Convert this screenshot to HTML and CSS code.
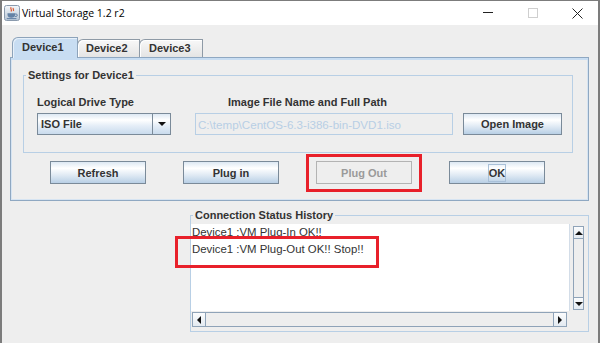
FILE: index.html
```html
<!DOCTYPE html>
<html lang="en">
<head>
    <meta charset="UTF-8">
    <title>Virtual Storage 1.2 r2</title>
    <link rel="stylesheet" href="styles.css">
</head>
<body>
    <div class="window">
        <div class="titlebar">
            <svg class="app-icon" width="16" height="16" viewBox="0 0 16 16">
                <defs>
                    <linearGradient id="iconBg" x1="0" y1="0" x2="0" y2="1">
                        <stop offset="0" stop-color="#f5f8fb"/>
                        <stop offset="1" stop-color="#b6c5d5"/>
                    </linearGradient>
                </defs>
                <rect x="0.5" y="0.5" width="15" height="15" rx="2" fill="url(#iconBg)" stroke="#8a9aad"/>
                <path d="M7.2 2.2c-1.6 1.4 1.4 2.2-.2 4.3M9.4 3c-1 1.1.9 1.5-.1 3" stroke="#e0562c" stroke-width="1.2" fill="none"/>
                <path d="M3.5 8.2h7.6v1.6c0 2-1.6 3-3.8 3s-3.8-1-3.8-3z" fill="#6482a6"/>
                <path d="M11.1 9h1a1.2 1.2 0 0 1 0 2.4h-1.3" stroke="#6482a6" fill="none"/>
                <path d="M2.8 13.6h9.6" stroke="#6482a6"/>
            </svg>
            <span class="title">Virtual Storage 1.2 r2</span>
            <div class="controls">
                <span class="ctl-min"></span>
                <span class="ctl-max"></span>
                <svg class="ctl-close" width="11" height="11" viewBox="0 0 11 11">
                    <path d="M0.5 0.5l10 10M10.5 0.5l-10 10" stroke="#222" stroke-width="1"/>
                </svg>
            </div>
        </div>

        <div class="content">
            <div class="tabs">
                <div class="tab active">Device1</div>
                <div class="tab tab-2">Device2</div>
                <div class="tab tab-3">Device3</div>
            </div>

            <div class="tab-panel">
                <fieldset class="group">
                    <legend>Settings for Device1</legend>
                    <div class="settings-body">
                        <label class="field-label">Logical Drive Type</label>
                        <label class="field-label path-label">Image File Name and Full Path</label>
                        <span></span>

                        <div class="combo">
                            <span class="combo-value">ISO File</span>
                            <span class="combo-arrow"></span>
                        </div>
                        <input class="path-field" type="text" value="C:\temp\CentOS-6.3-i386-bin-DVD1.iso" readonly>
                        <button class="btn btn-open">Open Image</button>
                    </div>
                </fieldset>

                <div class="actions">
                    <button class="btn">Refresh</button>
                    <button class="btn">Plug in</button>
                    <span class="marked"><button class="btn" disabled>Plug Out</button></span>
                    <button class="btn"><span class="focus">OK</span></button>
                </div>
            </div>

            <fieldset class="group history">
                <legend>Connection Status History</legend>
                <div class="history-body">
                    <div class="scroll-pane">
                        <div class="log">
                            <div class="log-line">Device1 :VM Plug-In OK!!</div>
                            <div class="log-line marked-line">Device1 :VM Plug-Out OK!! Stop!!</div>
                        </div>
                        <div class="vscroll">
                            <span class="sb-btn arrow-up"></span>
                            <span class="sb-track"></span>
                            <span class="sb-btn arrow-down"></span>
                        </div>
                        <div class="hscroll">
                            <span class="sb-btn arrow-left"></span>
                            <span class="sb-track"></span>
                            <span class="sb-btn arrow-right"></span>
                        </div>
                        <div class="corner"></div>
                    </div>
                </div>
            </fieldset>
        </div>
    </div>
</body>
</html>
```

FILE: styles.css
```css
:root {
    --bg: #eeeeee;
    --text: #333333;
    --blue-border: #b8cfe5;
    --control-border: #7a8a99;
    --tab-blue: #c8ddf2;
    --mark: #e8202a;
}

* {
    box-sizing: border-box;
}

body {
    margin: 0;
    background: #fff;
    font-family: "Liberation Sans", Arial, sans-serif;
    color: var(--text);
}

.window {
    width: 600px;
    height: 343px;
    border: 2px solid #7c7c7c;
    border-top-width: 1px;
    border-bottom: none;
    background: var(--bg);
    display: flex;
    flex-direction: column;
    overflow: hidden;
}

/* Title bar */
.titlebar {
    height: 24px;
    flex: none;
    background: #fff;
    display: flex;
    align-items: center;
}

.app-icon {
    margin-left: 2px;
}

.title {
    margin-left: 2px;
    font-family: "Segoe UI", "Open Sans", sans-serif;
    font-size: 10.5px;
    color: #000;
}

.controls {
    margin-left: auto;
    margin-right: 15px;
    display: flex;
    align-items: center;
}

.ctl-min {
    width: 10px;
    height: 1px;
    background: #222;
    margin-top: -1px;
}

.ctl-max {
    width: 10px;
    height: 10px;
    border: 1px solid #cfcfcf;
    margin-left: 35px;
}

.ctl-close {
    margin-left: 34px;
}

/* Tabs */
.content {
    flex: 1;
    padding: 12px 9px 0 8px;
}

.tabs {
    display: flex;
    align-items: flex-end;
    height: 20px;
    margin-left: 2px;
}

.tab {
    height: 18px;
    width: 63px;
    padding: 0 0 1px 8px;
    border: 1px solid #8e9aa6;
    border-bottom: none;
    border-top-left-radius: 6px 6px;
    background: linear-gradient(#f8f8f8, #e4e4e4);
    box-shadow: inset 1px 1px 0 #fff;
    font-size: 11px;
    font-weight: bold;
    display: flex;
    align-items: center;
    margin-left: -1px;
}

.tab.active {
    width: 66px;
    height: 21px;
    margin-left: 0;
    margin-bottom: -1px;
    padding: 0 0 2px 9px;
    position: relative;
    z-index: 1;
    border-color: #8da3ba;
    background: var(--tab-blue);
    box-shadow: inset 1px 1px 0 #e6f0fa;
}

.tab-3 {
    width: 64px;
    padding-left: 9px;
}

.tab-panel {
    border: 1px solid #8fa8c2;
    box-shadow: inset 0 2px 0 var(--tab-blue), inset 1px 0 0 #d6e4f2, inset -1px -1px 0 #d6e4f2;
    padding: 10px 15px 16px 12px;
}

/* Titled groups */
.group {
    margin: 0;
    padding: 0;
    min-width: 0;
    border: 1px solid var(--blue-border);
}

.group legend {
    margin-left: 2px;
    padding: 0 2px;
    font-size: 11px;
    font-weight: bold;
    line-height: 14px;
    color: var(--text);
}

.settings-body {
    display: grid;
    grid-template-columns: 158px 268px 99px;
    row-gap: 4px;
    padding: 13px 0 17px 13px;
}

.field-label {
    font-size: 11px;
    font-weight: bold;
    line-height: 14px;
}

.path-label {
    margin-left: 33px;
}

.combo {
    width: 134px;
    height: 22px;
    border: 1px solid var(--control-border);
    display: flex;
    background: linear-gradient(#dde8f3, #fff 30%, #e4edf7 60%, #c9dbed);
}

.combo-value {
    flex: 1;
    padding-left: 3px;
    font-size: 11px;
    font-weight: bold;
    line-height: 20px;
}

.combo-arrow {
    width: 18px;
    border-left: 1px solid var(--control-border);
    display: flex;
    align-items: center;
    justify-content: center;
}

.combo-arrow::before {
    content: "";
    border-left: 4px solid transparent;
    border-right: 4px solid transparent;
    border-top: 4px solid #111;
}

.path-field {
    width: 258px;
    height: 22px;
    margin: 0;
    padding: 0 2px;
    border: 1px solid var(--blue-border);
    background: var(--bg);
    color: var(--blue-border);
    font-family: "Liberation Sans", Arial, sans-serif;
    font-size: 11.6px;
    outline: none;
}

/* Buttons */
.btn {
    width: 96px;
    height: 23px;
    padding: 0;
    border: 1px solid var(--control-border);
    background: linear-gradient(#dde8f3, #fff 30%, #dde8f3 65%, #b8cfe5);
    font-family: "Liberation Sans", Arial, sans-serif;
    font-size: 11px;
    font-weight: bold;
    color: var(--text);
    display: flex;
    align-items: center;
    justify-content: center;
}

.btn:disabled {
    border-color: #b3b3b3;
    background: var(--bg);
    color: #9a9a9a;
}

.btn-open {
    width: 99px;
    height: 22px;
}

.focus {
    border: 1px solid #a9c0d8;
    line-height: 14px;
    padding: 1px 0;
}

.actions {
    display: flex;
    gap: 37px;
    margin: 8px 0 0 27px;
}

/* Red review marks */
.marked {
    position: relative;
    display: flex;
}

.marked::after {
    content: "";
    position: absolute;
    top: -7px;
    left: -10px;
    right: -10px;
    bottom: -8px;
    border: 3px solid var(--mark);
}

.marked-line {
    position: relative;
}

.marked-line::after {
    content: "";
    position: absolute;
    top: -5px;
    left: -17px;
    width: 198px;
    height: 26px;
    border: 3px solid var(--mark);
}

/* Connection status history */
.history {
    margin: 7px 0 0 180px;
}

.history-body {
    padding: 2px 3px 3px 0;
}

.scroll-pane {
    display: grid;
    grid-template-columns: 378px 16px;
    grid-template-rows: 87px 17px;
}

.log {
    background: #fff;
    padding-left: 1px;
    font-size: 11.4px;
    line-height: 17px;
    color: var(--text);
    white-space: nowrap;
}

.vscroll {
    display: flex;
    flex-direction: column;
    padding: 2px 1px 1px 3px;
    border-left: 1px solid #d3dde8;
}

.hscroll {
    display: flex;
    padding: 1px 2px 1px 1px;
}

.vscroll .sb-btn {
    height: 13px;
}

.hscroll .sb-btn {
    width: 14px;
}

.sb-btn {
    border: 1px solid #8fa3b8;
    background: linear-gradient(#fbfcfd, #e3eaf1);
    display: flex;
    align-items: center;
    justify-content: center;
}

.sb-track {
    flex: 1;
    border: 1px solid #8fa3b8;
    border-width: 0 1px;
    background: var(--bg);
}

.hscroll .sb-track {
    border-width: 1px 0;
}

.arrow-up::before {
    content: "";
    border-left: 4px solid transparent;
    border-right: 4px solid transparent;
    border-bottom: 4px solid #111;
}

.arrow-down::before {
    content: "";
    border-left: 4px solid transparent;
    border-right: 4px solid transparent;
    border-top: 4px solid #111;
}

.arrow-left::before {
    content: "";
    border-top: 4px solid transparent;
    border-bottom: 4px solid transparent;
    border-right: 4px solid #111;
}

.arrow-right::before {
    content: "";
    border-top: 4px solid transparent;
    border-bottom: 4px solid transparent;
    border-left: 4px solid #111;
}

.corner {
    background: var(--bg);
}
```
